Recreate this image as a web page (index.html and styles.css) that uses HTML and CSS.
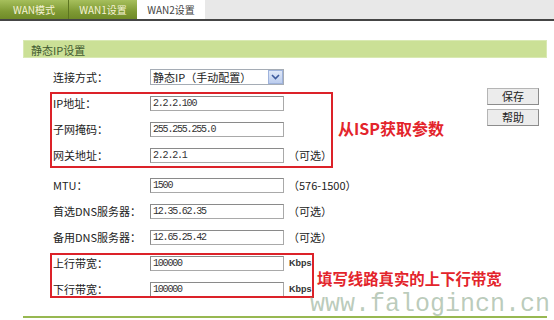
FILE: index.html
```html
<!DOCTYPE html>
<html lang="zh">
<head>
<meta charset="utf-8">
<title>WAN2设置</title>
<link rel="stylesheet" href="styles.css">
</head>
<body>
<div class="tabs">
  <div class="tab tab-green">WAN模式</div>
  <div class="tab tab-green">WAN1设置</div>
  <div class="tab tab-active">WAN2设置</div>
</div>
<div class="panel">
  <div class="panel-head">静态IP设置</div>
  <div class="panel-body">
    <div class="form">
      <div class="row">
        <span class="label">连接方式：</span>
        <div class="select"><span class="select-text">静态IP（手动配置）</span><span class="select-btn"><svg width="9" height="6" viewBox="0 0 9 6"><path d="M1 1 L4.5 4.5 L8 1" fill="none" stroke="#3d5a9c" stroke-width="1.6"/></svg></span></div>
      </div>
      <div class="row">
        <span class="label">IP地址：</span>
        <span class="field">2.2.2.100</span>
      </div>
      <div class="row">
        <span class="label">子网掩码：</span>
        <span class="field">255.255.255.0</span>
      </div>
      <div class="row">
        <span class="label">网关地址：</span>
        <span class="field">2.2.2.1</span>
        <span class="suffix">（可选）</span>
      </div>
      <div class="row row-gap">
        <span class="label">MTU：</span>
        <span class="field">1500</span>
        <span class="suffix">（576-1500）</span>
      </div>
      <div class="row">
        <span class="label">首选DNS服务器：</span>
        <span class="field">12.35.62.35</span>
        <span class="suffix">（可选）</span>
      </div>
      <div class="row">
        <span class="label">备用DNS服务器：</span>
        <span class="field">12.65.25.42</span>
        <span class="suffix">（可选）</span>
      </div>
      <div class="row">
        <span class="label">上行带宽：</span>
        <span class="field">100000</span>
        <span class="unit">Kbps</span>
      </div>
      <div class="row">
        <span class="label">下行带宽：</span>
        <span class="field">100000</span>
        <span class="unit">Kbps</span>
      </div>
    </div>
    <div class="actions">
      <button class="btn">保存</button>
      <button class="btn">帮助</button>
    </div>
    <div class="mark mark-isp"></div>
    <div class="mark mark-bw"></div>
    <div class="note note-isp">从ISP获取参数</div>
    <div class="note note-bw">填写线路真实的上下行带宽</div>
  </div>
</div>
<div class="watermark">www.falogincn.cn</div>
</body>
</html>
```
FILE: styles.css
```css
* { box-sizing: border-box; }
html, body { margin: 0; padding: 0; background: #fff; }
body {
  width: 554px;
  height: 320px;
  overflow: hidden;
  position: relative;
  font-family: "Noto Sans CJK SC", "Liberation Sans", sans-serif;
  font-size: 11px;
  color: #222;
}
.tabs {
  display: flex;
  height: 21px;
  background: #e8e8e8;
  border-bottom: 2px solid #454545;
}
.tab {
  height: 19px;
  line-height: 19px;
  text-align: center;
  font-size: 10px;
}
.tab-green {
  width: 69px;
  color: #f6f3d6;
  background: linear-gradient(#a6bf5c, #7f9a34 60%, #6f8a28);
  border-right: 1px solid #5d7520;
}
.tab-green + .tab-green { width: 68px; border-right: none; }
.tab-active {
  width: 68px;
  background: #fff;
  color: #444;
}
.panel {
  margin: 19px 7px 0 23px;
}
.panel-head {
  height: 18px;
  line-height: 18px;
  padding-left: 7px;
  background: #cbe096;
  border: 1px solid #d9e9b3;
  color: #3f5a30;
  font-size: 11px;
}
.panel-body {
  position: relative;
  display: flex;
  padding: 6px 8px 14px 30px;
  border-bottom: 2px solid #97b851;
}
.form { display: flex; flex-direction: column; }
.row {
  display: flex;
  align-items: center;
  height: 26px;
}
.row-gap { margin-top: 4px; }
.label {
  width: 97px;
  color: #222;
}
.field {
  width: 134px;
  height: 15px;
  line-height: 13px;
  padding-left: 2px;
  border: 1px solid #a9a9a9;
  border-top-color: #8a8a8a;
  border-left-color: #8a8a8a;
  background: #fff;
  font-family: "Liberation Mono", monospace;
  font-size: 10px;
  letter-spacing: -1.2px;
  color: #333;
}
.suffix {
  margin-left: 4px;
  font-size: 11px;
  color: #222;
}
.unit {
  margin-left: 5px;
  font-family: "Liberation Sans", sans-serif;
  font-size: 9px;
  font-weight: bold;
  color: #333;
}
.select {
  display: flex;
  width: 134px;
  height: 16px;
  border: 1px solid #a5acb5;
  background: #fff;
}
.select-text {
  flex: 1;
  line-height: 14px;
  padding-left: 2px;
  font-size: 11px;
}
.select-btn {
  width: 15px;
  height: 14px;
  display: flex;
  align-items: center;
  justify-content: center;
  background: linear-gradient(#dfe8f8, #bccdee);
  border: 1px solid #9fb3dc;
}
.actions {
  margin-left: auto;
  margin-top: 24px;
  display: flex;
  flex-direction: column;
  gap: 4px;
}
.btn {
  width: 52px;
  height: 17px;
  padding: 0;
  font-family: "Noto Sans CJK SC", sans-serif;
  font-size: 11px;
  line-height: 13px;
  color: #222;
  background: #ececec;
  border: 1px solid #8c8c8c;
  border-top-color: #b5b5b5;
  border-left-color: #b5b5b5;
}
.mark {
  position: absolute;
  border: 2px solid #dc2229;
}
.mark-isp { left: 27px; top: 34px; width: 283px; height: 76px; }
.mark-bw { left: 27px; top: 195px; width: 264px; height: 45px; }
.note {
  position: absolute;
  font-family: "Noto Sans CJK SC", sans-serif;
  font-weight: 700;
  color: #e3242b;
  line-height: 22px;
  white-space: nowrap;
}
.note-isp { left: 315px; top: 59px; font-size: 16px; }
.note-bw { left: 294px; top: 209px; font-size: 15.4px; }
.watermark {
  position: absolute;
  left: 310px;
  top: 296px;
  font-family: "Liberation Mono", monospace;
  font-size: 25px;
  line-height: 18px;
  color: rgba(130, 160, 130, 0.55);
  white-space: nowrap;
}
```
